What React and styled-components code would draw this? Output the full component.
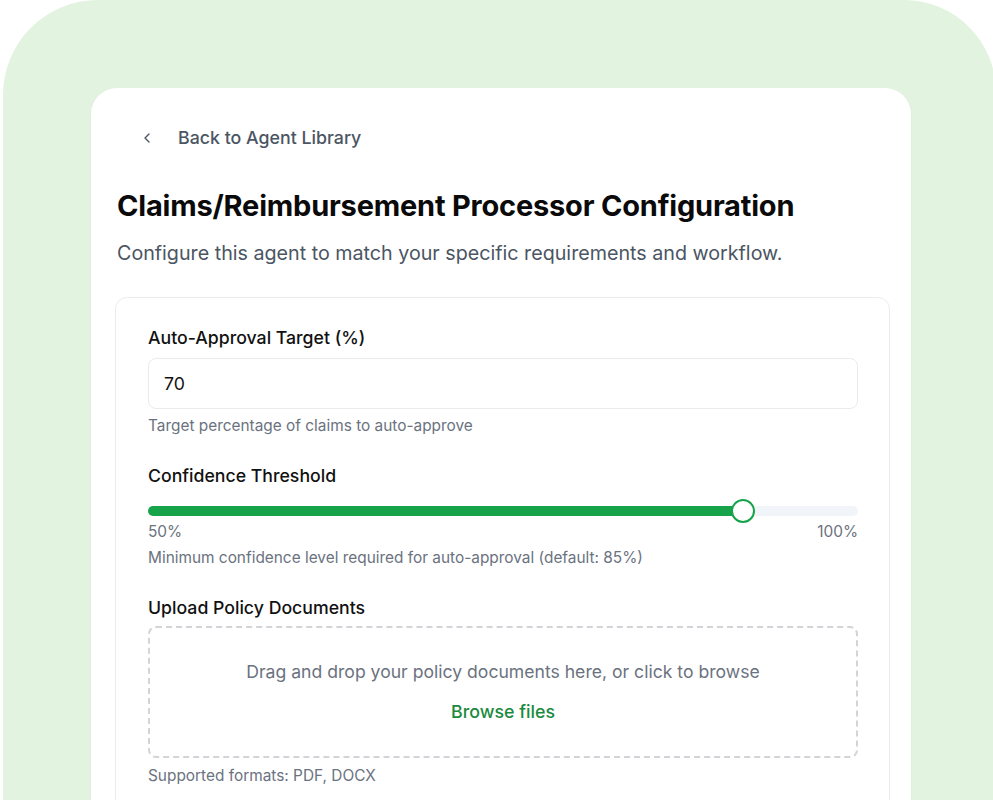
import React from 'react';
import styled, { createGlobalStyle } from 'styled-components';

const GlobalStyle = createGlobalStyle`
  html, body {
    margin: 0;
    padding: 0;
    background: #ffffff;
    overflow: hidden;
  }
  body {
    font-family: Inter, 'Noto Sans', 'Liberation Sans', sans-serif;
    -webkit-font-smoothing: antialiased;
  }
`;

const Stage = styled.div`
  padding-left: 3px;
  width: 993px;
  height: 800px;
  box-sizing: border-box;
`;

const Backdrop = styled.div`
  width: 993px;
  min-height: 900px;
  background: #e2f3e0;
  border-radius: 95px 92px 0 0;
  padding: 88px 0 0 88px;
  box-sizing: border-box;
`;

const Card = styled.div`
  width: 820px;
  min-height: 820px;
  background: #ffffff;
  border-radius: 26px;
  box-shadow: 0 1px 3px rgba(0, 0, 0, 0.04);
  padding: 34px 21px 0 24px;
  box-sizing: border-box;
`;

const BackLink = styled.a`
  display: inline-flex;
  align-items: center;
  gap: 23px;
  padding: 4px 0 4px 24px;
  font-size: 17.8px;
  font-weight: 500;
  line-height: 24px;
  color: #4b5563;
  text-decoration: none;
  cursor: pointer;
`;

const Header = styled.header`
  padding-left: 2px;
`;

const Title = styled.h1`
  margin: 34px 0 0;
  font-size: 29px;
  font-weight: 700;
  line-height: 36px;
  letter-spacing: -0.2px;
  color: #0a0a0a;
`;

const Subtitle = styled.p`
  margin: 15px 0 0;
  font-size: 19.7px;
  line-height: 28px;
  color: #4b5563;
`;

const Panel = styled.section`
  margin-top: 30px;
  border: 1px solid #ececec;
  border-radius: 12px;
  padding: 28px 31px 40px 32px;
  display: flex;
  flex-direction: column;
`;

const Field = styled.div`
  display: flex;
  flex-direction: column;
  & + & {
    margin-top: 28px;
  }
`;

const Label = styled.label`
  font-size: 17.7px;
  font-weight: 500;
  line-height: 24px;
  color: #111111;
`;

const Input = styled.input`
  margin-top: 8px;
  height: 51px;
  box-sizing: border-box;
  border: 1px solid #ebebeb;
  border-radius: 8px;
  padding: 0 15px;
  font-family: inherit;
  font-size: 17.7px;
  color: #111111;
  outline: none;
`;

const Hint = styled.p`
  margin: ${(p) => p.$top || 7}px 0 0;
  font-size: 15.4px;
  line-height: 20px;
  color: #6b7280;
`;

const Range = styled.input`
  -webkit-appearance: none;
  appearance: none;
  margin: 11px 0 0;
  width: 100%;
  height: 24px;
  background: transparent;
  outline: none;

  &::-webkit-slider-runnable-track {
    height: 10px;
    border-radius: 5px;
    background: linear-gradient(
      to right,
      #16a34a 0%,
      #16a34a var(--fill),
      #f1f5f9 var(--fill),
      #f1f5f9 100%
    );
  }
  &::-webkit-slider-thumb {
    -webkit-appearance: none;
    appearance: none;
    width: 24px;
    height: 24px;
    margin-top: -7px;
    border-radius: 50%;
    background: #ffffff;
    border: 2.5px solid #16a34a;
    box-sizing: border-box;
  }
`;

const RangeScale = styled.div`
  display: flex;
  justify-content: space-between;
  font-size: 15.4px;
  line-height: 18px;
  color: #6b7280;
`;

const DropZone = styled.div`
  margin-top: 6px;
  height: 132px;
  box-sizing: border-box;
  border: 2px dashed #d4d4d8;
  border-radius: 8px;
  display: flex;
  flex-direction: column;
  align-items: center;
  justify-content: center;
  gap: 14px;
  padding-top: 0;
`;

const DropText = styled.p`
  margin: 0;
  font-size: 17.6px;
  line-height: 26px;
  color: #6b7280;
`;

const BrowseButton = styled.button`
  border: 0;
  background: transparent;
  padding: 0;
  font-family: inherit;
  font-size: 17.8px;
  font-weight: 500;
  line-height: 26px;
  color: #1a8a3e;
  cursor: pointer;
`;

function ChevronLeft() {
  return (
    <svg width="16" height="16" viewBox="0 0 24 24" fill="none" stroke="#4b5563" strokeWidth="2" strokeLinecap="round" strokeLinejoin="round">
      <path d="m15 18-6-6 6-6" />
    </svg>
  );
}

export default function App() {
  const value = 85;
  // native thumb travels over (width - thumb), so the fill stops at its centre
  const fill = `calc(12px + ${value / 100} * (100% - 24px))`;

  return (
    <Stage>
      <GlobalStyle />
      <Backdrop>
        <Card>
          <BackLink>
            <ChevronLeft />
            Back to Agent Library
          </BackLink>
          <Header>
            <Title>Claims/Reimbursement Processor Configuration</Title>
            <Subtitle>Configure this agent to match your specific requirements and workflow.</Subtitle>
          </Header>

          <Panel>
            <Field>
              <Label>Auto-Approval Target (%)</Label>
              <Input defaultValue="70" />
              <Hint>Target percentage of claims to auto-approve</Hint>
            </Field>

            <Field>
              <Label>Confidence Threshold</Label>
              <Range type="range" min="0" max="100" defaultValue={value} style={{ '--fill': fill }} />
              <RangeScale>
                <span>50%</span>
                <span>100%</span>
              </RangeScale>
              <Hint>Minimum confidence level required for auto-approval (default: 85%)</Hint>
            </Field>

            <Field>
              <Label>Upload Policy Documents</Label>
              <DropZone>
                <DropText>Drag and drop your policy documents here, or click to browse</DropText>
                <BrowseButton>Browse files</BrowseButton>
              </DropZone>
              <Hint $top={8}>Supported formats: PDF, DOCX</Hint>
            </Field>
          </Panel>
        </Card>
      </Backdrop>
    </Stage>
  );
}
